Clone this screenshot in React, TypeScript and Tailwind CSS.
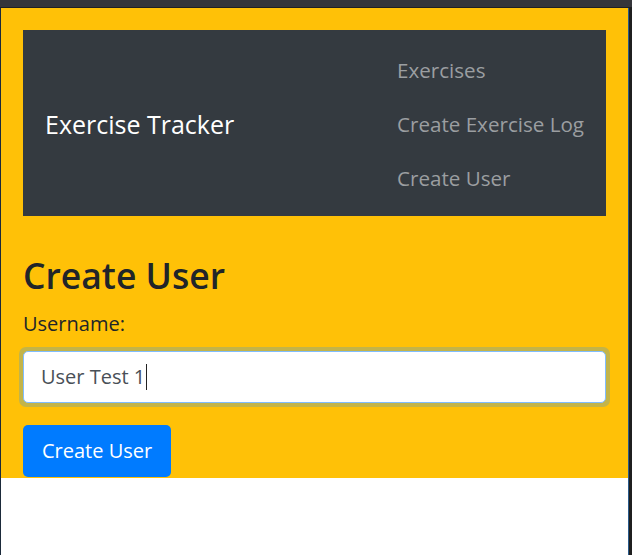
export default function App() {
  const font = { fontFamily: '"Open Sans", "Noto Sans", sans-serif' }
  return (
    <div className="w-[632px] h-[555px] flex flex-col bg-white overflow-hidden" style={font}>
      {/* window chrome */}
      <div className="h-[8px] bg-[#35363a] border-b border-[#1f2023] shrink-0" />
      <div className="flex flex-1">
        <div className="w-px bg-[#1b2a3a] shrink-0" />
        <div className="flex-1 flex flex-col">
          <div className="bg-[#ffc107] px-[22px] pt-[22px] pb-px">
            <nav className="h-[186px] bg-[#343a40] flex items-center pl-[22px] pr-[22px]">
              <span className="text-white text-[25px] leading-[30px] mt-[2px]">Exercise Tracker</span>
              <ul className="ml-auto flex flex-col mt-[2px]">
                {['Exercises', 'Create Exercise Log', 'Create User'].map((l) => (
                  <li key={l} className="text-[#9b9ea1] text-[20.6px] leading-[30px] py-[12px]">
                    {l}
                  </li>
                ))}
              </ul>
            </nav>
            <h3 className="text-[#212529] text-[35.5px] font-semibold leading-[42px] mt-[38px]">Create User</h3>
            <label className="block text-[#212529] text-[20px] leading-[30px] mt-[13px]">Username:</label>
            <div className="mt-[8px] rounded-[7px] p-[4px] -mx-[4px] bg-[#c3b449]">
              <div className="h-[52px] bg-white border border-[#80bdff] rounded-[5px] flex items-center px-[17px]">
                <span className="text-[#495057] text-[20px]">User Test 1</span>
                <span className="w-px h-[26px] bg-[#222] ml-[1px]" />
              </div>
            </div>
            <button className="mt-[18px] h-[52px] px-[19px] bg-[#007bff] text-white text-[20px] rounded-[5px]">
              Create User
            </button>
          </div>
        </div>
        <div className="w-[4px] bg-[#1f1f1f] border-l border-[#2a5a8a] shrink-0" />
      </div>
    </div>
  )
}
